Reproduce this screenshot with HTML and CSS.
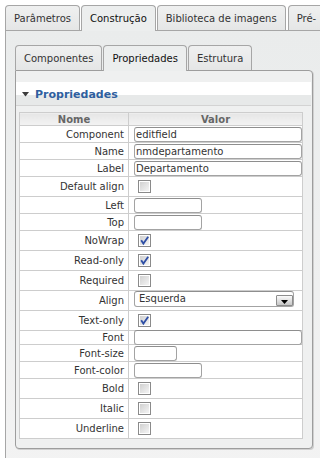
FILE: index.html
```html
<!DOCTYPE html>
<html lang="pt">
<head>
<meta charset="utf-8">
<title>Propriedades</title>
<link rel="stylesheet" href="styles.css">
</head>
<body>
<div class="page">
  <div class="tabs">
    <div class="tab">Parâmetros</div>
    <div class="tab active">Construção</div>
    <div class="tab">Biblioteca de imagens</div>
    <div class="tab tab-more">Pré-</div>
  </div>
  <div class="outer-panel">
    <div class="tabs">
      <div class="tab">Componentes</div>
      <div class="tab active">Propriedades</div>
      <div class="tab">Estrutura</div>
    </div>
    <div class="inner-panel">
      <div class="section-head">
        <svg class="tri" width="7" height="5" viewBox="0 0 7 5"><polygon points="0,0 7,0 3.5,4.5" fill="#3c3c3c"/></svg>
        <span>Propriedades</span>
      </div>
      <table class="props">
        <colgroup><col class="c1"><col class="c2"></colgroup>
        <tr class="h"><td><div class="cell">Nome</div></td><td><div class="cell">Valor</div></td></tr>
        <tr><td class="lbl"><div class="cell">Component</div></td><td class="val"><div class="cell"><input class="inp full" type="text" value="editfield"></div></td></tr>
        <tr><td class="lbl"><div class="cell">Name</div></td><td class="val"><div class="cell"><input class="inp full" type="text" value="nmdepartamento"></div></td></tr>
        <tr><td class="lbl"><div class="cell">Label</div></td><td class="val"><div class="cell"><input class="inp full" type="text" value="Departamento"></div></td></tr>
        <tr class="c"><td class="lbl"><div class="cell">Default align</div></td><td class="val"><div class="cell"><span class="cb"></span></div></td></tr>
        <tr><td class="lbl"><div class="cell">Left</div></td><td class="val"><div class="cell"><input class="inp w68" type="text" value=""></div></td></tr>
        <tr><td class="lbl"><div class="cell">Top</div></td><td class="val"><div class="cell"><input class="inp w68" type="text" value=""></div></td></tr>
        <tr class="c"><td class="lbl"><div class="cell">NoWrap</div></td><td class="val"><div class="cell"><span class="cb"><svg width="11" height="11" viewBox="0 0 11 11"><path d="M2.2 5.2 L4.4 8.6 L9.2 1.8" fill="none" stroke="#2f4fa6" stroke-width="1.8"/></svg></span></div></td></tr>
        <tr class="c"><td class="lbl"><div class="cell">Read-only</div></td><td class="val"><div class="cell"><span class="cb"><svg width="11" height="11" viewBox="0 0 11 11"><path d="M2.2 5.2 L4.4 8.6 L9.2 1.8" fill="none" stroke="#2f4fa6" stroke-width="1.8"/></svg></span></div></td></tr>
        <tr class="c"><td class="lbl"><div class="cell">Required</div></td><td class="val"><div class="cell"><span class="cb"></span></div></td></tr>
        <tr class="c"><td class="lbl"><div class="cell">Align</div></td><td class="val"><div class="cell top"><div class="sel"><span class="sel-txt">Esquerda</span><span class="sel-btn"><svg width="7" height="4" viewBox="0 0 7 4"><polygon points="0,0 7,0 3.5,4" fill="#000"/></svg></span></div></div></td></tr>
        <tr class="c"><td class="lbl"><div class="cell">Text-only</div></td><td class="val"><div class="cell"><span class="cb"><svg width="11" height="11" viewBox="0 0 11 11"><path d="M2.2 5.2 L4.4 8.6 L9.2 1.8" fill="none" stroke="#2f4fa6" stroke-width="1.8"/></svg></span></div></td></tr>
        <tr class="f"><td class="lbl"><div class="cell">Font</div></td><td class="val"><div class="cell"><input class="inp full" type="text" value=""></div></td></tr>
        <tr><td class="lbl"><div class="cell">Font-size</div></td><td class="val"><div class="cell"><input class="inp w43" type="text" value=""></div></td></tr>
        <tr><td class="lbl"><div class="cell">Font-color</div></td><td class="val"><div class="cell"><input class="inp w68" type="text" value=""></div></td></tr>
        <tr class="c"><td class="lbl"><div class="cell">Bold</div></td><td class="val"><div class="cell"><span class="cb"></span></div></td></tr>
        <tr class="c"><td class="lbl"><div class="cell">Italic</div></td><td class="val"><div class="cell"><span class="cb"></span></div></td></tr>
        <tr class="c"><td class="lbl"><div class="cell">Underline</div></td><td class="val"><div class="cell"><span class="cb"></span></div></td></tr>
      </table>
    </div>
  </div>
</div>
</body>
</html>
```
FILE: styles.css
```css
html, body {
  margin: 0;
  overflow: hidden;
  background: #fff;
}
body {
  font-family: "DejaVu Sans", Verdana, sans-serif;
  font-size: 10px;
  color: #333;
}
.page {
  padding: 5px 0 0 5px;
  width: 360px;
}
.tabs {
  display: flex;
  gap: 1px;
  align-items: flex-start;
  white-space: nowrap;
  position: relative;
  z-index: 1;
  height: 25px;
}
.tab {
  line-height: 24px;
  padding: 1px 8px 0;
  box-sizing: border-box;
  height: 25px;
  border: 1px solid #a6a6a6;
  border-bottom: 0;
  border-radius: 4px 4px 0 0;
  background: linear-gradient(#eff0f0, #e5e6e6);
  color: #333;
}
.tab.active {
  height: 26px;
  background: #eceeee;
  color: #111;
}
.tab.tab-more {
  margin-left: 1px;
  padding-right: 40px;
}
.outer-panel {
  border: 1px solid #a6a6a6;
  border-right: 0;
  background: linear-gradient(#eaecec, #f3f3f3);
  padding: 14px 0 40px 9px;
}
.inner-panel {
  box-sizing: border-box;
  width: 298px;
  border: 1px solid #9d9d9d;
  border-radius: 0 4px 4px 4px;
  box-shadow: 1px 1px 0 #d0d0d0;
  background: #eff0f0;
  padding: 11px 0 9px 0;
}
.section-head {
  height: 24px;
  box-sizing: border-box;
  margin-right: 1px;
  border-bottom: 1px solid #d3d3d3;
  background: linear-gradient(#fff 0, #fff 13px, #e7e9e9 13px);
  display: flex;
  align-items: center;
  padding: 2px 0 0 6px;
  gap: 6px;
  font-size: 11px;
  font-weight: bold;
  color: #2f5f9f;
}
.section-head .tri {
  margin-top: -1px;
}
.props {
  margin: 6px 0 0 3px;
  width: 284px;
  border-collapse: collapse;
  table-layout: fixed;
  background: #fff;
}
.props col.c1 {
  width: 109px;
}
.props td {
  border: 1px solid #cdcdcd;
  padding: 0;
}
.cell {
  height: 16px;
  display: flex;
  align-items: center;
  white-space: nowrap;
}
.props tr.c .cell {
  height: 19px;
}
.props tr.f .cell {
  height: 13px;
}
.props tr.h td {
  background: linear-gradient(#e6e6e6, #f3f3f3);
}
.props tr.h .cell {
  height: 12px;
  justify-content: center;
  font-weight: bold;
  color: #666;
  line-height: 12px;
  padding-top: 1px;
  box-sizing: border-box;
}
.lbl .cell {
  justify-content: flex-end;
  padding-right: 4px;
}
.val .cell {
  padding-left: 5px;
}
.cell.top {
  align-items: flex-start;
}
.inp {
  box-sizing: border-box;
  height: 15px;
  margin: 0;
  border: 1px solid #a3a3a3;
  border-top-color: #8e8e8e;
  border-radius: 3px;
  background: #fff;
  font-family: "DejaVu Sans", Verdana, sans-serif;
  font-size: 10px;
  color: #333;
  padding: 0 1px;
  outline: none;
}
.full { width: 168px; }
.w68 { width: 68px; }
.w43 { width: 43px; }
.cb {
  box-sizing: border-box;
  width: 13px;
  height: 13px;
  margin-left: 4px;
  border: 1px solid #8a8a8a;
  background: linear-gradient(135deg, #cdcdcd, #f8f8f8);
  box-shadow: inset 0 0 0 1px #fff;
  display: flex;
  align-items: center;
  justify-content: center;
}
.sel {
  box-sizing: border-box;
  width: 160px;
  height: 16px;
  border: 1px solid #a3a3a3;
  border-top-color: #8e8e8e;
  border-radius: 3px;
  background: #fff;
  display: flex;
  justify-content: space-between;
  padding-left: 4px;
}
.sel-txt {
  line-height: 14px;
  color: #333;
}
.sel-btn {
  box-sizing: border-box;
  width: 17px;
  height: 11px;
  align-self: flex-end;
  border: 1px solid #8d8d8d;
  border-radius: 1px;
  background: linear-gradient(#fbfbfb, #c6c6c6);
  display: flex;
  align-items: flex-end;
  justify-content: center;
  padding-bottom: 1px;
}
```
